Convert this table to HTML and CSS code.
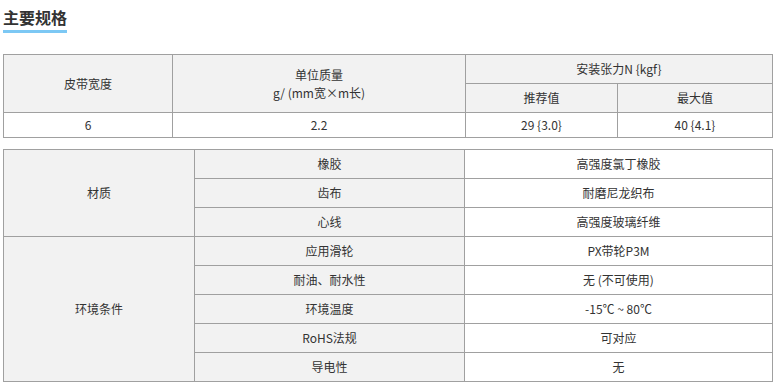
FILE: index.html
```html
<!DOCTYPE html>
<html lang="zh-CN">
<head>
    <meta charset="UTF-8">
    <title>主要规格</title>
    <link rel="stylesheet" href="styles.css">
</head>
<body>
    <div class="spec">
        <h2 class="spec-title">主要规格</h2>

        <table class="spec-table first">
            <colgroup>
                <col style="width:169px">
                <col style="width:293px">
                <col style="width:152px">
                <col>
            </colgroup>
            <tr class="head">
                <th rowspan="2">皮带宽度</th>
                <th rowspan="2">单位质量<br>g/ (mm宽×m长)</th>
                <th colspan="2">安装张力N {kgf}</th>
            </tr>
            <tr class="head">
                <th>推荐值</th>
                <th>最大值</th>
            </tr>
            <tr class="data">
                <td>6</td>
                <td>2.2</td>
                <td>29 {3.0}</td>
                <td>40 {4.1}</td>
            </tr>
        </table>

        <table class="spec-table second">
            <colgroup>
                <col style="width:191px">
                <col style="width:270px">
                <col>
            </colgroup>
            <tr>
                <th rowspan="3">材质</th>
                <th>橡胶</th>
                <td>高强度氯丁橡胶</td>
            </tr>
            <tr>
                <th>齿布</th>
                <td>耐磨尼龙织布</td>
            </tr>
            <tr>
                <th>心线</th>
                <td>高强度玻璃纤维</td>
            </tr>
            <tr>
                <th rowspan="5">环境条件</th>
                <th>应用滑轮</th>
                <td>PX带轮P3M</td>
            </tr>
            <tr>
                <th>耐油、耐水性</th>
                <td>无 (不可使用)</td>
            </tr>
            <tr>
                <th>环境温度</th>
                <td>-15℃ ~ 80℃</td>
            </tr>
            <tr>
                <th>RoHS法规</th>
                <td>可对应</td>
            </tr>
            <tr>
                <th>导电性</th>
                <td>无</td>
            </tr>
        </table>
    </div>
</body>
</html>
```

FILE: styles.css
```css
body { margin: 0; background: white; color: #333; font-family: "Noto Sans CJK SC", "Noto Sans", sans-serif; }
.spec { padding: 5px 3px 0 3px; width: 770px; }
.spec-title { display: inline-block; margin: 0 0 21px 0; font-size: 16px; font-weight: bold; line-height: 23px; color: #333; border-bottom: 3px solid #7cc8f4; padding-bottom: 1px; }
.spec-table { width: 770px; border-collapse: collapse; table-layout: fixed; font-size: 12px; }
.spec-table th, .spec-table td { border: 1px solid #a0a0a0; text-align: center; font-weight: normal; padding: 0 4px; line-height: 18px; color: #333; }
.spec-table th { background: #f2f2f2; }
.spec-table td { background: white; }
.first .head th { height: 28px; }
.first .data td { height: 24px; }
.first { margin-bottom: 11px; }
.second th, .second td { height: 28px; }
```
